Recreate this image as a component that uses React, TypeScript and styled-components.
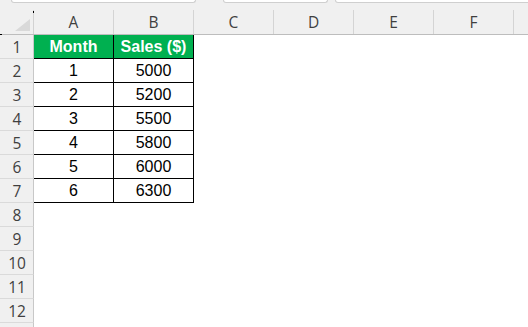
import React from "react";
import styled, { createGlobalStyle } from "styled-components";

const Global = createGlobalStyle`
  html, body { margin: 0; padding: 0; background: #ffffff; overflow: hidden; }
  body { font-family: "Liberation Sans", Arial, sans-serif; }
`;

const Sheet = styled.div`
  width: 528px;
  height: 327px;
  overflow: hidden;
  background: #ffffff;
  position: relative;
`;

const TabStrip = styled.div`
  display: flex;
  height: 3px;
  background: #f0f0f0;
`;

const Tab = styled.div<{ $left: number; $width: number }>`
  flex: none;
  margin-left: ${(p) => p.$left}px;
  width: ${(p) => p.$width}px;
  height: 2px;
  background: #ffffff;
  border: 1px solid #cfcfcf;
  border-top: none;
  border-radius: 0 0 4px 4px;
`;

const HeaderRow = styled.div`
  display: flex;
  align-items: flex-end;
  height: 31px;
  background: #f0f0f0;
  border-bottom: 1px solid #bdbdbd;
`;

const Corner = styled.div`
  position: relative;
  flex: none;
  width: 34px;
  height: 24px;
  box-sizing: border-box;
  border-right: 1px solid #d2d2d2;
`;

const CornerTriangle = styled.div`
  position: absolute;
  right: 3px;
  bottom: 3px;
  width: 0;
  height: 0;
  border-left: 15px solid transparent;
  border-bottom: 12px solid #d9d9d9;
`;

const ColHeader = styled.div`
  flex: none;
  width: 80px;
  height: 24px;
  box-sizing: border-box;
  border-right: 1px solid #d4d4d4;
  display: flex;
  align-items: center;
  justify-content: center;
  font-family: "Open Sans", "Noto Sans", sans-serif;
  font-size: 15.5px;
  color: #3f3f3f;
  padding-bottom: 1px;
`;

const Row = styled.div`
  display: flex;
  height: 24px;
`;

const RowHeader = styled.div`
  flex: none;
  width: 34px;
  height: 24px;
  box-sizing: border-box;
  background: #f0f0f0;
  border-right: 1px solid #c8c8c8;
  border-bottom: 1px solid #dadada;
  display: flex;
  align-items: center;
  justify-content: center;
  font-family: "Open Sans", "Noto Sans", sans-serif;
  font-size: 15.5px;
  color: #3f3f3f;
  padding-left: 1px;
`;

const Cell = styled.div<{ $head?: boolean }>`
  flex: none;
  width: 80px;
  height: 24px;
  box-sizing: border-box;
  border-right: 1px solid #000;
  border-bottom: 1px solid #000;
  background: ${(p) => (p.$head ? "#00b050" : "#ffffff")};
  color: ${(p) => (p.$head ? "#ffffff" : "#000000")};
  font-weight: ${(p) => (p.$head ? 700 : 400)};
  font-family: "Liberation Sans", Arial, sans-serif;
  font-size: 16px;
  display: flex;
  align-items: center;
  justify-content: center;
  padding-top: 1px;
`;

const Mark = styled.div`
  position: absolute;
  left: 0;
  top: 34px;
  width: 2px;
  height: 1px;
  background: #000;
`;

const MarkV = styled.div`
  position: absolute;
  left: 33px;
  top: 11px;
  width: 1px;
  height: 2px;
  background: #000;
`;

const data: [number, number][] = [
  [1, 5000],
  [2, 5200],
  [3, 5500],
  [4, 5800],
  [5, 6000],
  [6, 6300],
];

export default function App() {
  const cols = ["A", "B", "C", "D", "E", "F", ""];
  const rows = Array.from({ length: 13 }, (_, i) => i + 1);
  return (
    <>
      <Global />
      <Sheet>
        <TabStrip>
          <Tab $left={11} $width={183} />
          <Tab $left={27} $width={103} />
          <Tab $left={7} $width={200} />
        </TabStrip>
        <HeaderRow>
          <Corner>
            <CornerTriangle />
          </Corner>
          {cols.map((c, i) => (
            <ColHeader key={i}>{c}</ColHeader>
          ))}
        </HeaderRow>
        {rows.map((r) => (
          <Row key={r}>
            <RowHeader>{r <= 12 ? r : ""}</RowHeader>
            {r === 1 && (
              <>
                <Cell $head>Month</Cell>
                <Cell $head>Sales ($)</Cell>
              </>
            )}
            {r >= 2 && r <= 7 && (
              <>
                <Cell>{data[r - 2][0]}</Cell>
                <Cell>{data[r - 2][1]}</Cell>
              </>
            )}
          </Row>
        ))}
        <Mark />
        <MarkV />
      </Sheet>
    </>
  );
}
